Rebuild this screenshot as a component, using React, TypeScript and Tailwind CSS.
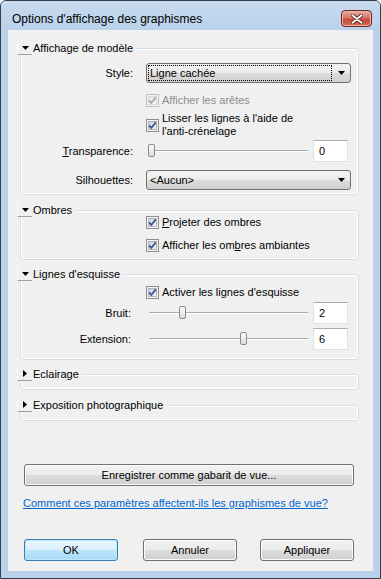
import React from 'react'

const font = { fontFamily: '"Liberation Sans", Arial, sans-serif' }

const Check: React.FC<{ on?: boolean; off?: boolean }> = ({ on = true, off }) => (
  <svg width="13" height="13" viewBox="0 0 13 13" className="shrink-0">
    <defs>
      <linearGradient id={off ? 'cbd' : 'cbg'} x1="0" y1="0" x2="1" y2="1">
        <stop offset="0" stopColor={off ? '#e6e6e6' : '#cbcfd5'} />
        <stop offset="1" stopColor={off ? '#f8f8f8' : '#f6f6f6'} />
      </linearGradient>
    </defs>
    <rect x="0.5" y="0.5" width="12" height="12" fill="#f4f4f4" stroke={off ? '#c0c0c0' : '#8e8f8f'} />
    <rect x="2.5" y="2.5" width="8" height="8" fill={`url(#${off ? 'cbd' : 'cbg'})`} stroke={off ? '#d6d6d6' : '#b0b4ba'} />
    {on && (
      <path d="M3.2 6.4 L5.3 9 L9.8 3.4" fill="none" stroke={off ? '#a6a6a6' : '#3d5597'} strokeWidth="1.8" strokeLinejoin="round" />
    )}
  </svg>
)

const Arrow: React.FC = () => (
  <svg width="7" height="4" viewBox="0 0 7 4"><path d="M0 0 H7 L3.5 4 Z" fill="#000" /></svg>
)

const Dropdown: React.FC<{ text: string; focus?: boolean }> = ({ text, focus }) => (
  <div className="ml-[13px] w-[205px] h-[20px] flex items-center border border-[#707070] rounded-[3px] bg-[linear-gradient(to_bottom,#f2f2f2_0%,#ebebeb_50%,#dddddd_50%,#cfcfcf_100%)]">
    <div className={`ml-[1px] w-[184px] h-[16px] flex items-center pl-[1px] ${focus ? 'border border-dotted border-black' : 'border border-transparent'}`}>
      {text}
    </div>
    <div className="ml-[6px]"><Arrow /></div>
  </div>
)

const Slider: React.FC<{ value: number; max: number }> = ({ value, max }) => (
  <div className="relative ml-[13px] w-[164px] h-[22px] flex items-center">
    <div className="ml-[3px] w-[159px] h-[2px] border-t border-[#a8a8a8] bg-[#e2e2e2] border-b border-b-white" />
    <div
      className="absolute top-[4px] w-[7px] h-[13px] rounded-[2px] border border-[#8a8a8a] bg-[linear-gradient(to_bottom,#fbfbfb,#dcdcdc)]"
      style={{ left: 2 + (value / max) * 153 }}
    />
  </div>
)

const NumBox: React.FC<{ v: string }> = ({ v }) => (
  <div className="ml-[3px] w-[35px] h-[22px] flex items-center pl-[5px] bg-white border border-[#dbdfe6] border-t-[#abadb3]">{v}</div>
)

const Group: React.FC<{ title: string; open?: boolean; className?: string; children?: React.ReactNode }> = ({ title, open, className, children }) => (
  <div className={`relative w-[339px] border border-[#d5dfe5] rounded-[3px] shadow-[inset_0_0_0_1px_#ffffff] ${className || ''}`}>
    <div className="absolute left-[-4px] top-[-8px] h-[14px] flex items-center bg-[#f0f0f0] pr-[3px]">
      <div className="w-[15px] h-[14px] border-b border-[#a0a0a0] border-l border-l-white flex items-center justify-center">
        {open ? (
          <svg width="7" height="4" viewBox="0 0 7 4"><path d="M0 0 H7 L3.5 4 Z" fill="#000" /></svg>
        ) : (
          <svg width="4" height="7" viewBox="0 0 4 7"><path d="M0 0 V7 L4 3.5 Z" fill="#000" /></svg>
        )}
      </div>
      <span className="pl-[1px] leading-[14px]">{title}</span>
    </div>
    {children}
  </div>
)

const Btn: React.FC<{ children: React.ReactNode; def?: boolean; className?: string }> = ({ children, def, className }) => (
  <div
    className={`h-[22px] flex items-center justify-center rounded-[3px] border ${
      def
        ? 'border-[#3c7fb1] bg-[linear-gradient(to_bottom,#eaf6fd_0%,#d9f0fc_50%,#bee6fd_50%,#a7d9f5_100%)] shadow-[inset_0_0_0_1px_#bfe7f9]'
        : 'border-[#707070] bg-[linear-gradient(to_bottom,#f2f2f2_0%,#ebebeb_50%,#dddddd_50%,#cfcfcf_100%)] shadow-[inset_0_0_0_1px_#fcfcfc]'
    } ${className || ''}`}
  >
    {children}
  </div>
)

export default function App() {
  return (
    <div style={font} className="w-[381px] h-[579px] text-[11px] text-black flex flex-col border border-[#343f4c] rounded-t-[6px] bg-[#b9d1ea] overflow-hidden">
      {/* title bar */}
      <div className="h-[29px] flex items-start bg-[linear-gradient(to_bottom,#c8dbef,#b9d1ea)]">
        <div className="ml-[11px] mt-[11px] leading-[14px] text-[12px]">Options d'affichage des graphismes</div>
        <div className="ml-auto mr-[8px] mt-[9px] w-[31px] h-[17px] rounded-[4px] border border-[#6b241b] flex items-center justify-center bg-[linear-gradient(to_bottom,#e9ab9d_0%,#d8786a_45%,#c54a36_55%,#d56a53_100%)] shadow-[inset_0_0_0_1px_#eeb5a8]">
          <svg width="12" height="10" viewBox="0 0 12 10">
            <path d="M1.5 1.2 L10.5 8.8 M10.5 1.2 L1.5 8.8" stroke="#4a120b" strokeWidth="3.6" strokeLinecap="round" />
            <path d="M1.5 1.2 L10.5 8.8 M10.5 1.2 L1.5 8.8" stroke="#ffffff" strokeWidth="2" strokeLinecap="round" />
          </svg>
        </div>
      </div>

      {/* client */}
      <div className="mx-[7px] mb-[7px] flex-1 bg-[#f0f0f0] flex flex-col px-[12px]">
        <Group title="Affichage de modèle" open className="mt-[18px] pt-[14px] pb-[4px]">
          <div className="flex items-center h-[20px]">
            <div className="w-[112px] text-right">Style:</div>
            <Dropdown text="Ligne cachée" focus />
          </div>
          <div className="mt-[9px] h-[16px] flex items-center pl-[125px]">
            <Check off />
            <span className="ml-[3px] text-[#8d8d8d]">Afficher les arêtes</span>
          </div>
          <div className="mt-[4px] flex items-center pl-[125px]">
            <Check />
            <span className="ml-[3px] leading-[13px]">Lisser les lignes à l'aide de<br />l'anti-crénelage</span>
          </div>
          <div className="mt-[2px] h-[22px] flex items-center">
            <div className="w-[112px] text-right"><span className="underline">T</span>ransparence:</div>
            <Slider value={0} max={100} />
            <NumBox v="0" />
          </div>
          <div className="mt-[8px] h-[20px] flex items-center">
            <div className="w-[112px] text-right">Silhouettes:</div>
            <Dropdown text="<Aucun>" />
          </div>
        </Group>

        <Group title="Ombres" open className="mt-[15px] pt-[3px] pb-[6px]">
          <div className="h-[16px] flex items-center pl-[125px]">
            <Check />
            <span className="ml-[3px]"><span className="underline">P</span>rojeter des ombres</span>
          </div>
          <div className="mt-[7px] h-[16px] flex items-center pl-[125px]">
            <Check />
            <span className="ml-[3px]">Afficher les om<span className="underline">b</span>res ambiantes</span>
          </div>
        </Group>

        <Group title="Lignes d'esquisse" open className="mt-[14px] pt-[9px] pb-[9px]">
          <div className="h-[16px] flex items-center pl-[125px]">
            <Check />
            <span className="ml-[3px]">Activer les lignes d'esquisse</span>
          </div>
          <div className="mt-[2px] h-[22px] flex items-center">
            <div className="w-[110px] text-right">Bruit:</div>
            <div className="ml-[2px]" />
            <Slider value={2} max={10} />
            <NumBox v="2" />
          </div>
          <div className="mt-[4px] h-[22px] flex items-center">
            <div className="w-[110px] text-right">Extension:</div>
            <div className="ml-[2px]" />
            <Slider value={6} max={10} />
            <NumBox v="6" />
          </div>
        </Group>

        <Group title="Eclairage" className="mt-[14px] h-[16px]" />
        <Group title="Exposition photographique" className="mt-[15px] h-[16px]" />

        <Btn className="mt-[43px] ml-[4px] w-[330px]">Enregistrer comme gabarit de vue...</Btn>
        <div className="mt-[10px] ml-[3px] leading-[14px] text-[#0066cc] underline">Comment ces paramètres affectent-ils les graphismes de vue?</div>

        <div className="mt-[29px] ml-[4px] flex">
          <Btn def className="w-[94px]">OK</Btn>
          <Btn className="ml-[25px] w-[94px]">Annuler</Btn>
          <Btn className="ml-[23px] w-[94px]">Appliquer</Btn>
        </div>
      </div>
    </div>
  )
}
